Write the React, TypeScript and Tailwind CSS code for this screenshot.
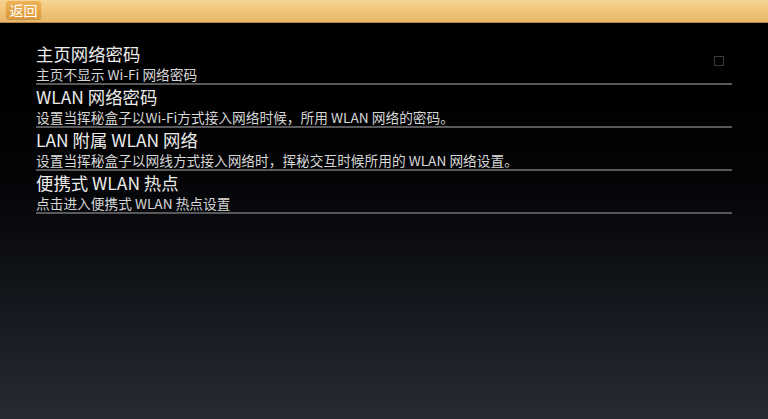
import React from "react";

const rows = [
  { title: "主页网络密码", sub: "主页不显示 Wi-Fi 网络密码", check: true },
  { title: "WLAN 网络密码", sub: "设置当挥秘盒子以Wi-Fi方式接入网络时候，所用 WLAN 网络的密码。" },
  { title: "LAN 附属 WLAN 网络", sub: "设置当挥秘盒子以网线方式接入网络时，挥秘交互时候所用的 WLAN 网络设置。" },
  { title: "便携式 WLAN 热点", sub: "点击进入便携式 WLAN 热点设置" },
];

export default function App() {
  return (
    <div
      className="w-[768px] h-[419px] flex flex-col overflow-hidden"
      style={{ fontFamily: '"Noto Sans CJK SC", "Noto Sans", sans-serif' }}
    >
      <div className="h-[23px] shrink-0 bg-gradient-to-b from-[#f7d594] via-[#f1c679] to-[#e9b86a] border-b border-[#b5843f] flex items-start px-[6px] pt-[1px]">
        <div className="h-[18px] w-[35px] rounded-[3px] bg-gradient-to-b from-[#eeb458] to-[#dc9838] flex items-center justify-center text-white text-[14px] leading-[18px] shadow-[0_1px_1px_rgba(120,70,10,0.35)]">
          返回
        </div>
      </div>
      <div className="flex-1 bg-gradient-to-b from-[#000000] to-[#272b34] px-9 pt-[20px]">
        {rows.map((r, i) => (
          <div key={i} className="mb-[1px]">
            <div className="flex items-center">
              <div className="flex-1">
                <div className="text-[17.4px] leading-[22px] text-[#ececec] whitespace-nowrap">{r.title}</div>
                <div className="text-[13.7px] leading-[18px] text-[#d6d6d6] whitespace-nowrap">{r.sub}</div>
              </div>
              {r.check && (
                <div className="w-[10px] h-[10px] border border-[#3c3c3c] mr-2 mt-[-4px]" />
              )}
            </div>
            <div className="h-[2px] bg-[#58585b]" />
          </div>
        ))}
      </div>
    </div>
  );
}
